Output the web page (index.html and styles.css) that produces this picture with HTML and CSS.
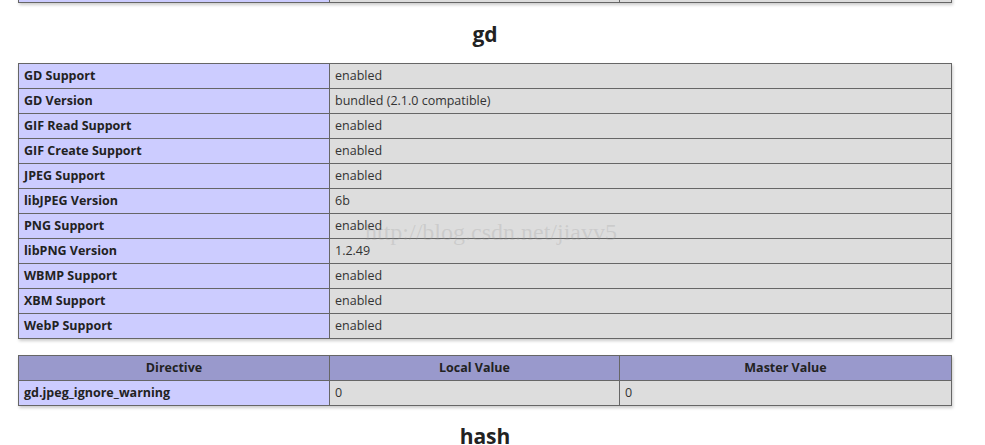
FILE: index.html
```html
<!DOCTYPE html>
<html>
<head>
<meta charset="utf-8">
<link rel="stylesheet" href="styles.css">
</head>
<body>
<div class="page">
  <table class="tbl tbl-top">
    <tr><td class="e">&nbsp;</td><td class="v col2">&nbsp;</td><td class="v">&nbsp;</td></tr>
  </table>
  <h2 class="title">gd</h2>
  <div class="wrap">
    <table class="tbl">
      <tr><td class="e">GD Support</td><td class="v">enabled</td></tr>
      <tr><td class="e">GD Version</td><td class="v">bundled (2.1.0 compatible)</td></tr>
      <tr><td class="e">GIF Read Support</td><td class="v">enabled</td></tr>
      <tr><td class="e">GIF Create Support</td><td class="v">enabled</td></tr>
      <tr><td class="e">JPEG Support</td><td class="v">enabled</td></tr>
      <tr><td class="e">libJPEG Version</td><td class="v">6b</td></tr>
      <tr><td class="e">PNG Support</td><td class="v">enabled</td></tr>
      <tr><td class="e">libPNG Version</td><td class="v">1.2.49</td></tr>
      <tr><td class="e">WBMP Support</td><td class="v">enabled</td></tr>
      <tr><td class="e">XBM Support</td><td class="v">enabled</td></tr>
      <tr><td class="e">WebP Support</td><td class="v">enabled</td></tr>
    </table>
    <div class="watermark">http://blog.csdn.net/jiavv5</div>
  </div>
  <table class="tbl tbl-dir">
    <tr class="h"><th>Directive</th><th class="col2">Local Value</th><th>Master Value</th></tr>
    <tr><td class="e">gd.jpeg_ignore_warning</td><td class="v">0</td><td class="v">0</td></tr>
  </table>
  <h2 class="title title-hash">hash</h2>
</div>
</body>
</html>
```
FILE: styles.css
```css
html, body {
  margin: 0;
  padding: 0;
  background: #fff;
  overflow: hidden;
}
body {
  font-family: "Open Sans", "Noto Sans", sans-serif;
  color: #222;
}
.page {
  width: 970px;
}
.tbl {
  border-collapse: collapse;
  width: 934px;
  margin: 0 auto;
  box-shadow: 1px 2px 3px #ccc;
}
.tbl td, .tbl th {
  border: 1px solid #666;
  font-size: 12.5px;
  padding: 4px 5px;
  line-height: 16px;
  vertical-align: middle;
}
.tbl td.e {
  background: #ccf;
  width: 300px;
  font-weight: bold;
  color: #222;
}
.tbl td.v {
  background: #ddd;
  color: #333;
}
.tbl th {
  background: #99c;
  font-weight: bold;
  text-align: center;
  color: #222;
}
.tbl .col2 {
  width: 279px;
}
.tbl-top {
  margin-top: -23px;
}
.tbl-dir {
  margin-top: 16px;
}
.title {
  font-size: 21px;
  line-height: 28px;
  height: 28px;
  margin: 17px 0 15px;
  text-align: center;
  font-weight: bold;
  color: #222;
}
.title-hash {
  margin-top: 16px;
}
.wrap {
  position: relative;
}
.watermark {
  position: absolute;
  left: 365px;
  top: 155px;
  font-family: "Liberation Serif", serif;
  font-size: 24px;
  line-height: 28px;
  color: rgba(150, 150, 150, 0.25);
  pointer-events: none;
}
```
